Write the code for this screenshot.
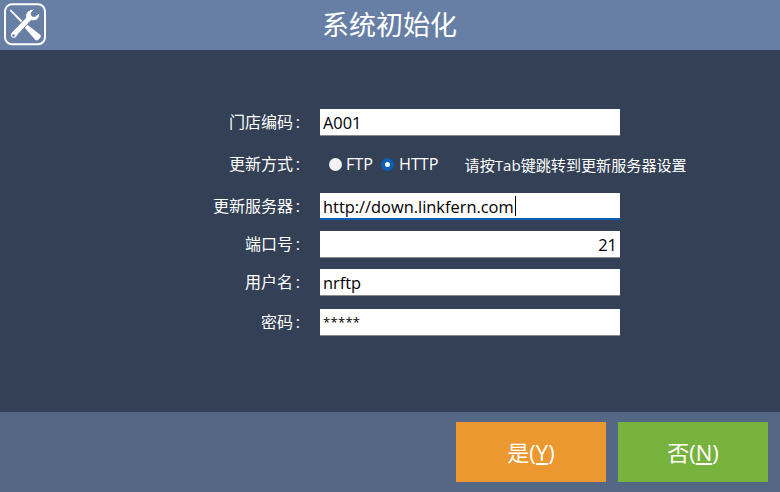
<div class="app">
  <header>
    <div class="logo">
      <svg width="50" height="50" viewBox="0 0 50 50">
        <rect x="5" y="4.3" width="40" height="40" rx="7" fill="none" stroke="#fff" stroke-width="2" />
        <path d="M9.5 10.5 L11 9.5 L24 22.5 L22.5 24 Z" fill="#fff" />
        <path d="M27 24.5 L40.5 35 Q41.5 36.5 40 38 L38 40 Q36.5 41 35 39.5 L24.5 27.5 Z" fill="#fff" />
        <path d="M35 9 L31 13 L32 16 L35 16.5 L39.5 12.5 Q40.5 17.5 36.5 20 Q34 21.5 31 20.5 L18 34.5 Q15.5 39.5 12.5 38 Q8.5 35.5 12 32 L25.5 18 Q25 14 27.5 11.5 Q30.5 8.5 35 9 Z" fill="#fff" stroke="#6880a6" stroke-width="1" />
        <circle cx="13.5" cy="35.5" r="1.3" fill="#6880a6" />
      </svg>
    </div>
    <h1>系统初始化</h1>
  </header>

  <main>
    <div class="row first">
      <span class="label">门店编码<span class="colon">:</span></span>
      <div class="field">A001</div>
    </div>
    <div class="row radios">
      <span class="label">更新方式<span class="colon">:</span></span>
      <div class="options">
        <span class="radio"></span><span class="opt">FTP</span>
        <span class="radio on"></span><span class="opt">HTTP</span>
        <span class="hint">请按Tab键跳转到更新服务器设置</span>
      </div>
    </div>
    <div class="row server">
      <span class="label">更新服务器<span class="colon">:</span></span>
      <div class="field focus">http://down.linkfern.com<i class="caret"></i></div>
    </div>
    <div class="row">
      <span class="label">端口号<span class="colon">:</span></span>
      <div class="field num">21</div>
    </div>
    <div class="row">
      <span class="label">用户名<span class="colon">:</span></span>
      <div class="field">nrftp</div>
    </div>
    <div class="row pass">
      <span class="label">密码<span class="colon">:</span></span>
      <div class="field stars"><span>*****</span></div>
    </div>
  </main>

  <footer>
    <button class="yes">是(<u>Y</u>)</button>
    <button class="no">否(<u>N</u>)</button>
  </footer>
</div>

<style>
  :global(body) {
    margin: 0;
  }

  .app {
    width: 780px;
    height: 492px;
    display: flex;
    flex-direction: column;
    background: #344055;
    color: #fff;
    font-family: "Open Sans", "Noto Sans CJK SC", sans-serif;
    overflow: hidden;
  }

  header {
    height: 50px;
    flex: none;
    background: #677fa5;
    display: flex;
    align-items: center;
    justify-content: center;
    position: relative;
  }

  .logo {
    position: absolute;
    left: 0;
    top: 0;
    width: 50px;
    height: 50px;
  }

  h1 {
    margin: 0 1px 0 0;
    font-size: 27px;
    font-weight: 400;
    line-height: 50px;
  }

  main {
    flex: 1;
    padding-top: 59px;
  }

  .row {
    display: flex;
    align-items: center;
    height: 27px;
    margin-top: 11px;
  }

  .row.first {
    margin-top: 0;
  }

  .row.radios {
    margin-top: 15px;
  }

  .row.server {
    margin-top: 15px;
  }

  .row.pass {
    margin-top: 13px;
  }

  .label {
    width: 301px;
    flex: none;
    text-align: right;
    font-size: 16px;
    padding: 0 0 3px;
    box-sizing: border-box;
    color: #fff;
  }

  .colon {
    display: inline-block;
    width: 8px;
    padding-right: 1px;
    box-sizing: border-box;
    text-align: right;
  }

  .field {
    margin-left: 19px;
    height: 27px;
    padding: 0 1px 0 3px;
    background: #fff;
    border-bottom: 1px solid #8a8a8a;
    box-sizing: border-box;
    width: 300px;
    color: #000;
    font-size: 16.4px;
    display: flex;
    align-items: center;
  }

  .field.focus {
    border-bottom: 2px solid #0a5fb4;
    padding-top: 1px;
  }

  .field.num {
    justify-content: flex-end;
    padding-right: 3px;
  }

  .field.stars span {
    font-size: 13px;
    letter-spacing: 0.3px;
    padding-bottom: 1px;
  }

  .caret {
    width: 1px;
    height: 20px;
    background: #000;
    margin-left: 1px;
  }

  .options {
    margin-left: 28px;
    display: flex;
    align-items: center;
    font-size: 16.2px;
    padding-bottom: 1px;
  }

  .radio {
    width: 13px;
    height: 13px;
    border-radius: 50%;
    background: #f2f2f2;
    box-sizing: border-box;
    margin-right: 4px;
    margin-top: 1px;
  }

  .radio.on {
    background: #fff;
    border: 4px solid #0a5fb4;
    margin-right: 5px;
  }

  .opt {
    margin-right: 8px;
  }

  .hint {
    margin-left: 18px;
    font-size: 15.1px;
  }

  footer {
    height: 80px;
    flex: none;
    background: #546885;
    display: flex;
    justify-content: flex-end;
    align-items: center;
    gap: 12px;
    padding-right: 12px;
  }

  button {
    width: 150px;
    height: 60px;
    border: 0;
    padding: 0 0 2px;
    color: #fff;
    font-family: inherit;
    font-size: 22px;
  }

  .yes {
    background: #ea982f;
  }

  .no {
    background: #78b23e;
  }
</style>
